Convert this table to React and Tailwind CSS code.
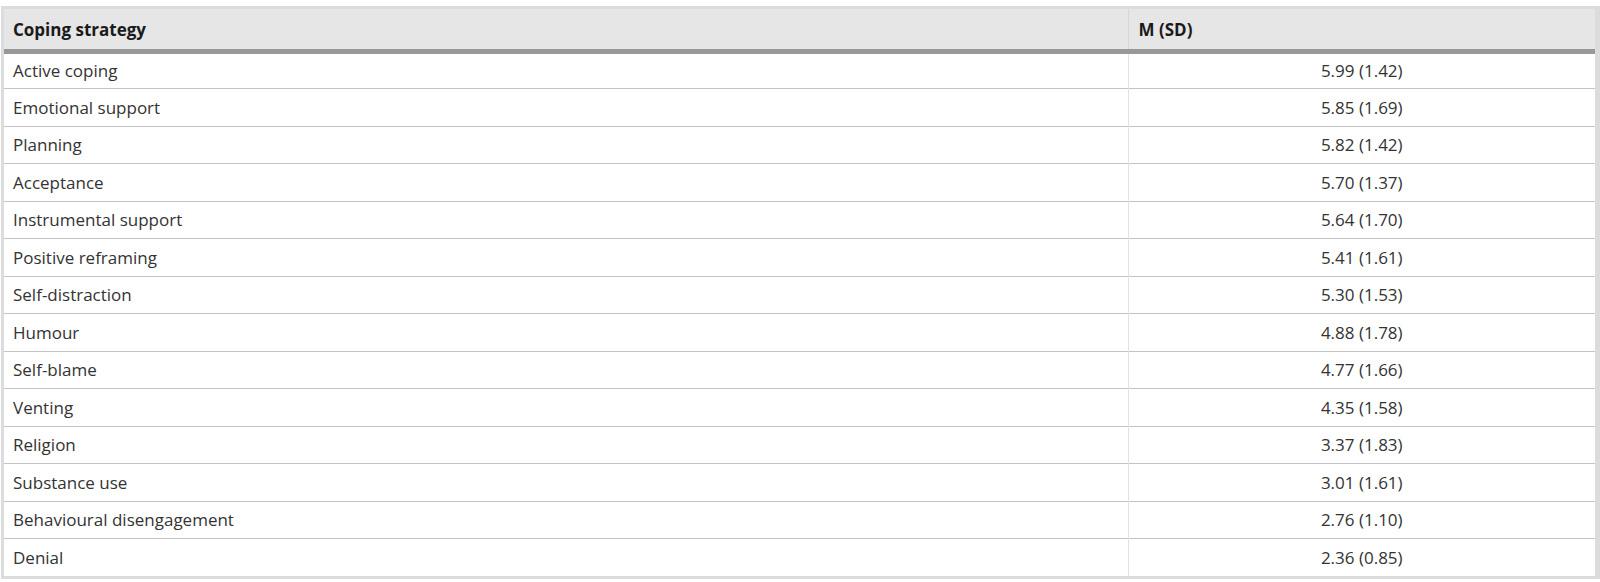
const ROWS = [
  ['Active coping', '5.99 (1.42)'],
  ['Emotional support', '5.85 (1.69)'],
  ['Planning', '5.82 (1.42)'],
  ['Acceptance', '5.70 (1.37)'],
  ['Instrumental support', '5.64 (1.70)'],
  ['Positive reframing', '5.41 (1.61)'],
  ['Self-distraction', '5.30 (1.53)'],
  ['Humour', '4.88 (1.78)'],
  ['Self-blame', '4.77 (1.66)'],
  ['Venting', '4.35 (1.58)'],
  ['Religion', '3.37 (1.83)'],
  ['Substance use', '3.01 (1.61)'],
  ['Behavioural disengagement', '2.76 (1.10)'],
  ['Denial', '2.36 (0.85)'],
];

export default function App() {
  return (
    <div className="bg-white pt-[6px] pl-[1px] h-[582px]" style={{ fontFamily: '"Open Sans", "Noto Sans", sans-serif' }}>
      <div className="border-t-[3px] border-l-[3px] border-b-[3px] border-r-[5px] border-[#dcdcdc] w-[1599px]">
        <table className="w-full border-collapse text-[17px] text-[#333]">
          <thead>
            <tr className="bg-[#e6e6e6] h-[42px] border-b-[5px] border-[#989898]">
              <th className="w-[1124px] pl-[9px] text-left font-bold text-[#1a1a1a] pt-[1px] border-r border-[#d6d6d6]">Coping strategy</th>
              <th className="pl-[10px] text-left font-bold text-[#1a1a1a] pt-[1px]">M (SD)</th>
            </tr>
          </thead>
          <tbody>
            {ROWS.map(([name, val], i) => (
              <tr key={name} className={`h-[37.5px] ${i < ROWS.length - 1 ? 'border-b border-[#c4c4c4]' : ''}`}>
                <td className="pl-[9px] border-r border-[#e2e2e2]">{name}</td>
                <td className="text-center">{val}</td>
              </tr>
            ))}
          </tbody>
        </table>
      </div>
    </div>
  );
}
